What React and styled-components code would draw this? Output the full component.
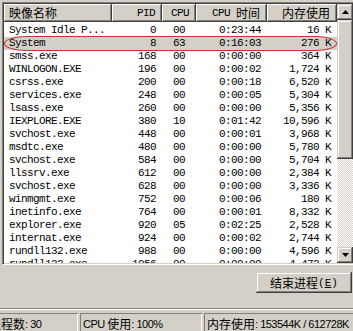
import React from "react";
import styled, { createGlobalStyle } from "styled-components";

const GlobalStyle = createGlobalStyle`
  html, body {
    margin: 0;
    padding: 0;
    background: #d4d0c8;
    overflow: hidden;
  }
`;

const processes = [
  ["System Idle P...", "0", "00", "0:23:44", "16 K"],
  ["System", "8", "63", "0:16:03", "276 K"],
  ["smss.exe", "168", "00", "0:00:00", "364 K"],
  ["WINLOGON.EXE", "196", "00", "0:00:02", "1,724 K"],
  ["csrss.exe", "200", "00", "0:00:18", "6,520 K"],
  ["services.exe", "248", "00", "0:00:05", "5,304 K"],
  ["lsass.exe", "260", "00", "0:00:00", "5,356 K"],
  ["IEXPLORE.EXE", "380", "10", "0:01:42", "10,596 K"],
  ["svchost.exe", "448", "00", "0:00:01", "3,968 K"],
  ["msdtc.exe", "480", "00", "0:00:00", "5,780 K"],
  ["svchost.exe", "584", "00", "0:00:00", "5,704 K"],
  ["llssrv.exe", "612", "00", "0:00:00", "2,384 K"],
  ["svchost.exe", "628", "00", "0:00:00", "3,336 K"],
  ["winmgmt.exe", "752", "00", "0:00:06", "180 K"],
  ["inetinfo.exe", "764", "00", "0:00:01", "8,332 K"],
  ["explorer.exe", "920", "05", "0:02:25", "2,528 K"],
  ["internat.exe", "924", "00", "0:00:02", "2,744 K"],
  ["rundll132.exe", "988", "00", "0:00:00", "4,596 K"],
  ["rundll132.exe", "1056", "00", "0:00:00", "4,472 K"],
];

const COLS = "108px 50px 34px 71px 70px";

const TaskManager = () => {
  return (
    <Window>
      <GlobalStyle />
      <ListFrame>
        <ListBody>
          <Header>
            <HeadCell>
              <Cjk>映像名称</Cjk>
            </HeadCell>
            <HeadCell $right>PID</HeadCell>
            <HeadCell $right>CPU</HeadCell>
            <HeadCell $right>
              CPU <Cjk>时间</Cjk>
            </HeadCell>
            <HeadCell $right>
              <Cjk>内存使用</Cjk>
            </HeadCell>
          </Header>
          <Rows>
            {processes.map((p, i) => (
              <Row key={i} $selected={i === 1}>
                <Cell>{p[0]}</Cell>
                <Cell $right>{p[1]}</Cell>
                <Cell $right $pad={11}>
                  {p[2]}
                </Cell>
                <Cell $right>{p[3]}</Cell>
                <Cell $right>{p[4]}</Cell>
              </Row>
            ))}
          </Rows>
          <Mark />
        </ListBody>
        <ScrollBar>
          <ScrollButton>
            <svg width="7" height="4" viewBox="0 0 7 4">
              <path d="M3.5 0 L7 4 L0 4 Z" fill="#000" />
            </svg>
          </ScrollButton>
          <Thumb />
          <Track />
          <ScrollButton>
            <svg width="7" height="4" viewBox="0 0 7 4">
              <path d="M0 0 L7 0 L3.5 4 Z" fill="#000" />
            </svg>
          </ScrollButton>
        </ScrollBar>
      </ListFrame>
      <Actions>
        <EndButton>
          <Cjk>结束进程</Cjk>(<u>E</u>)
        </EndButton>
      </Actions>
      <StatusBar>
        <Pane $width={89}>
          <Cjk>进程数</Cjk>: 30
        </Pane>
        <Pane $width={119}>
          CPU <Cjk>使用</Cjk>: 100%
        </Pane>
        <Pane $width={170}>
          <Cjk>内存使用</Cjk>: 153544K / 612728K
        </Pane>
      </StatusBar>
    </Window>
  );
};

const Window = styled.div`
  width: 353px;
  height: 331px;
  overflow: hidden;
  background: #d4d0c8;
  display: flex;
  flex-direction: column;
`;

const ListFrame = styled.div`
  margin: 2px 0 0 2px;
  width: 355px;
  height: 263px;
  flex: none;
  display: flex;
  border-top: 1px solid #808080;
  border-left: 1px solid #808080;
  border-bottom: 1px solid #fff;
  box-shadow: inset 1px 1px #404040, inset 0 -1px #d4d0c8;
  padding: 1px 0 1px 1px;
  box-sizing: border-box;
`;

const ListBody = styled.div`
  position: relative;
  width: 333px;
  flex: none;
  background: #fff;
  overflow: hidden;
`;

const Header = styled.div`
  display: grid;
  grid-template-columns: ${COLS};
  height: 18px;
`;

const HeadCell = styled.div`
  display: flex;
  align-items: center;
  justify-content: ${(p) => (p.$right ? "flex-end" : "flex-start")};
  padding: 0 6px 0 5px;
  background: #d4d0c8;
  border-right: 1px solid #404040;
  border-bottom: 1px solid #404040;
  box-shadow: inset 1px 1px #fff, inset -1px -1px #808080;
  font-family: "Liberation Mono", monospace;
  font-size: 11px;
  letter-spacing: -0.6px;
  color: #000;
  white-space: pre;
`;

const Cjk = styled.span`
  font-family: "Noto Sans CJK SC", sans-serif;
  font-size: 12px;
  letter-spacing: 0;
`;

const Rows = styled.div`
  padding-top: 2px;
  display: flex;
  flex-direction: column;
`;

const Row = styled.div`
  display: grid;
  grid-template-columns: ${COLS};
  height: 13px;
  background: ${(p) => (p.$selected ? "#d4d0c8" : "transparent")};
`;

const Cell = styled.div`
  font-family: "Liberation Mono", monospace;
  font-size: 11px;
  letter-spacing: -0.6px;
  line-height: 13px;
  color: #000;
  text-align: ${(p) => (p.$right ? "right" : "left")};
  padding: 0 ${(p) => (p.$pad ? p.$pad : 6)}px 0 5px;
  white-space: pre;
  overflow: hidden;
`;

const Mark = styled.div`
  position: absolute;
  left: 0px;
  top: 32px;
  width: 333px;
  height: 15px;
  box-sizing: border-box;
  border: 1px solid #c83232;
  border-radius: 22px / 7.5px;
  pointer-events: none;
`;

const ScrollBar = styled.div`
  width: 16px;
  flex: none;
  display: flex;
  flex-direction: column;
`;

const raised = `
  background: #d4d0c8;
  box-shadow: inset -1px -1px #404040, inset 1px 1px #d4d0c8,
    inset -2px -2px #808080, inset 2px 2px #fff;
`;

const ScrollButton = styled.div`
  ${raised}
  height: 16px;
  flex: none;
  display: flex;
  align-items: center;
  justify-content: center;
`;

const Thumb = styled.div`
  ${raised}
  height: 139px;
  flex: none;
`;

const Track = styled.div`
  flex: 1;
  background-color: #fff;
  background-image: conic-gradient(
    #d4d0c8 25%,
    #fff 0 50%,
    #d4d0c8 0 75%,
    #fff 0
  );
  background-size: 2px 2px;
`;

const Actions = styled.div`
  display: flex;
  justify-content: flex-end;
  padding: 7px 1px 0 0;
`;

const EndButton = styled.div`
  ${raised}
  width: 96px;
  height: 21px;
  display: flex;
  align-items: center;
  justify-content: center;
  font-family: "Liberation Mono", monospace;
  font-size: 11px;
  color: #000;
  u {
    text-underline-offset: 1px;
  }
`;

const StatusBar = styled.div`
  margin-top: 15px;
  border-top: 1px solid #808080;
  box-shadow: inset 0 1px #fff;
  padding-top: 4px;
  margin-left: -14px;
  display: flex;
  gap: 2px;
  height: 22px;
`;

const Pane = styled.div`
  width: ${(p) => p.$width}px;
  flex: none;
  box-shadow: inset 1px 1px #808080, inset -1px -1px #fff;
  display: flex;
  align-items: center;
  padding: 2px 0 0 3px;
  font-family: "Liberation Sans", "Noto Sans CJK SC", sans-serif;
  font-size: 11px;
  letter-spacing: -0.5px;
  color: #000;
  white-space: pre;
`;

export default TaskManager;
